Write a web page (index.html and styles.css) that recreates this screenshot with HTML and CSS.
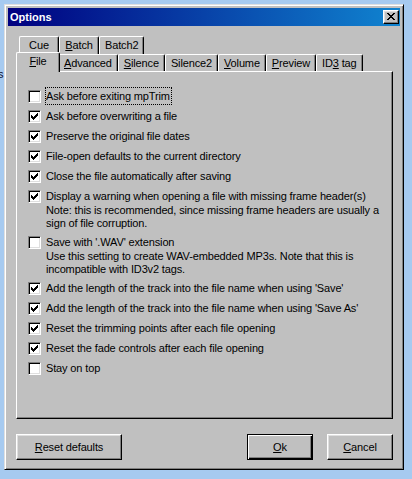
FILE: index.html
```html
<!DOCTYPE html>
<html lang="en">
<head>
    <meta charset="UTF-8">
    <title>Options</title>
    <link rel="stylesheet" href="styles.css">
</head>
<body>
<div class="desk"><span>s</span></div>

<div class="window">
    <div class="titlebar">
        <span class="title">Options</span>
        <div class="close">
            <svg width="8" height="7" viewBox="0 0 8 7" shape-rendering="crispEdges">
                <path fill="#000" d="M0 0h2v1h-2zM6 0h2v1h-2zM1 1h2v1h-2zM5 1h2v1h-2zM2 2h4v1h-4zM3 3h2v1h-2zM2 4h4v1h-4zM1 5h2v1h-2zM5 5h2v1h-2zM0 6h2v1h-2zM6 6h2v1h-2z"/>
            </svg>
        </div>
    </div>

    <div class="content">
        <div class="tabrow back">
            <div class="tab"><span>Cue</span></div>
            <div class="tab"><span><u>B</u>atch</span></div>
            <div class="tab"><span>Batch2</span></div>
        </div>
        <div class="tabrow front">
            <div class="tab active"><span><u>F</u>ile</span></div>
            <div class="tab"><span><u>A</u>dvanced</span></div>
            <div class="tab"><span><u>S</u>ilence</span></div>
            <div class="tab"><span>Silence2</span></div>
            <div class="tab"><span><u>V</u>olume</span></div>
            <div class="tab"><span><u>P</u>review</span></div>
            <div class="tab"><span>ID<u>3</u> tag</span></div>
        </div>

        <div class="panel">
            <div class="option"><span class="box"></span><span class="label focus">Ask before exiting mpTrim</span></div>
            <div class="option"><span class="box checked"></span><span class="label">Ask before overwriting a file</span></div>
            <div class="option"><span class="box checked"></span><span class="label">Preserve the original file dates</span></div>
            <div class="option"><span class="box checked"></span><span class="label">File-open defaults to the current directory</span></div>
            <div class="option"><span class="box checked"></span><span class="label">Close the file automatically after saving</span></div>
            <div class="option"><span class="box checked"></span><span class="label">Display a warning when opening a file with missing frame header(s)</span></div>
            <div class="note">Note: this is recommended, since missing frame headers are usually a<br>sign of file corruption.</div>
            <div class="option"><span class="box"></span><span class="label">Save with '.WAV' extension</span></div>
            <div class="note">Use this setting to create WAV-embedded MP3s. Note that this is<br>incompatible with ID3v2 tags.</div>
            <div class="option"><span class="box checked"></span><span class="label">Add the length of the track into the file name when using 'Save'</span></div>
            <div class="option"><span class="box checked"></span><span class="label">Add the length of the track into the file name when using 'Save As'</span></div>
            <div class="option"><span class="box checked"></span><span class="label">Reset the trimming points after each file opening</span></div>
            <div class="option"><span class="box checked"></span><span class="label">Reset the fade controls after each file opening</span></div>
            <div class="option"><span class="box"></span><span class="label">Stay on top</span></div>
        </div>

        <div class="buttons">
            <div class="btn reset"><span><u>R</u>eset defaults</span></div>
            <div class="spacer"></div>
            <div class="btn default"><span><u>O</u>k</span></div>
            <div class="btn"><span><u>C</u>ancel</span></div>
        </div>
    </div>
</div>

<script>
    // put the little check mark in every checked box
    const check = '<svg width="7" height="7" viewBox="0 0 7 7" shape-rendering="crispEdges">' +
        '<path fill="#000" d="M0 2h1v1h1v1h1v-1h1v-1h1v-1h1v-1h1v3h-1v1h-1v1h-1v1h-1v1h-1v-1h-1v-1h-1z"/></svg>';
    document.querySelectorAll(".box.checked").forEach((el) => {
        el.innerHTML = check;
    });
</script>
</body>
</html>
```

FILE: styles.css
```css
body {
    font-family: "Liberation Sans", Arial, sans-serif;
    font-size: 11px;
    letter-spacing: -0.14px;
    color: #000;
    background: #a6caf0;
    margin: 0;
    padding: 0;
    display: flex;
    height: 479px;
    overflow: hidden;
}
.desk {
    width: 4px;
    overflow: hidden;
    padding-top: 68px;
}
.desk span {
    display: block;
    margin-left: -2px;
    color: #101030;
}
.window {
    width: 400px;
    height: 466px;
    margin-top: 4px;
    box-sizing: border-box;
    background: #c0c0c0;
    border: 1px solid;
    border-color: #dfdfdf #000 #000 #dfdfdf;
    box-shadow: inset 1px 1px #fff, inset -1px -1px #808080;
    padding: 3px;
    display: flex;
    flex-direction: column;
}
.titlebar {
    height: 18px;
    background: linear-gradient(to right, #000080, #1084d0);
    display: flex;
    align-items: center;
    padding: 0 1px 0 2px;
}
.title {
    flex: 1;
    color: #fff;
    font-weight: bold;
    font-size: 11px;
    letter-spacing: 0;
}
.close {
    width: 16px;
    height: 14px;
    box-sizing: border-box;
    background: #c0c0c0;
    border: 1px solid;
    border-color: #fff #000 #000 #fff;
    box-shadow: inset -1px -1px #808080, inset 1px 1px #dfdfdf;
    display: flex;
    align-items: center;
    justify-content: center;
    padding: 0 1px 1px 0;
}
.close svg {
    display: block;
}
.content {
    padding: 10px 7px 0 8px;
}
.tabrow {
    display: flex;
    align-items: flex-end;
}
.tabrow.back {
    height: 18px;
    padding-left: 3px;
}
.tabrow.front {
    height: 17px;
    padding-left: 2px;
}
.tab {
    height: 100%;
    min-width: 40px;
    box-sizing: border-box;
    padding: 0 5px 1px 5px;
    display: flex;
    align-items: center;
    justify-content: center;
    background: #c0c0c0;
    border-top: 1px solid #fff;
    border-left: 1px solid #fff;
    border-right: 1px solid #000;
    border-radius: 2px 2px 0 0;
    box-shadow: inset -1px 0 #808080;
    white-space: nowrap;
}
.tab.active {
    height: 20px;
    margin: 0 -2px -1px -2px;
    min-width: 44px;
    padding-bottom: 3px;
    position: relative;
    z-index: 1;
}
.panel {
    height: 348px;
    box-sizing: border-box;
    border: 1px solid;
    border-color: #fff #000 #000 #fff;
    box-shadow: inset -1px -1px #808080;
    padding: 14px 0 0 11px;
}
.option {
    height: 20px;
    display: flex;
    align-items: center;
}
.box {
    width: 13px;
    height: 13px;
    box-sizing: border-box;
    background: #fff;
    border: 1px solid;
    border-color: #808080 #fff #fff #808080;
    box-shadow: inset 1px 1px #000, inset -1px -1px #dfdfdf;
    margin-right: 4px;
    display: flex;
    align-items: center;
    justify-content: center;
    flex-shrink: 0;
}
.box svg {
    display: block;
}
.label {
    border: 1px solid transparent;
    line-height: 16px;
    padding-right: 1px;
    white-space: nowrap;
}
.label.focus {
    border: 1px dotted #000;
}
.note {
    padding-left: 18px;
    line-height: 13px;
    margin: -2px 0 2px 0;
    white-space: nowrap;
}
.buttons {
    display: flex;
    margin-top: 15px;
    gap: 14px;
}
.spacer {
    flex: 1;
}
.btn {
    width: 66px;
    height: 26px;
    box-sizing: border-box;
    background: #c0c0c0;
    border: 1px solid;
    border-color: #fff #000 #000 #fff;
    box-shadow: inset -1px -1px #808080, inset 1px 1px #dfdfdf;
    display: flex;
    align-items: center;
    justify-content: center;
}
.btn.reset {
    width: 106px;
}
.btn.default {
    border-color: #000;
    box-shadow: inset 1px 1px #fff, inset -1px -1px #000, inset -2px -2px #808080;
}
```
